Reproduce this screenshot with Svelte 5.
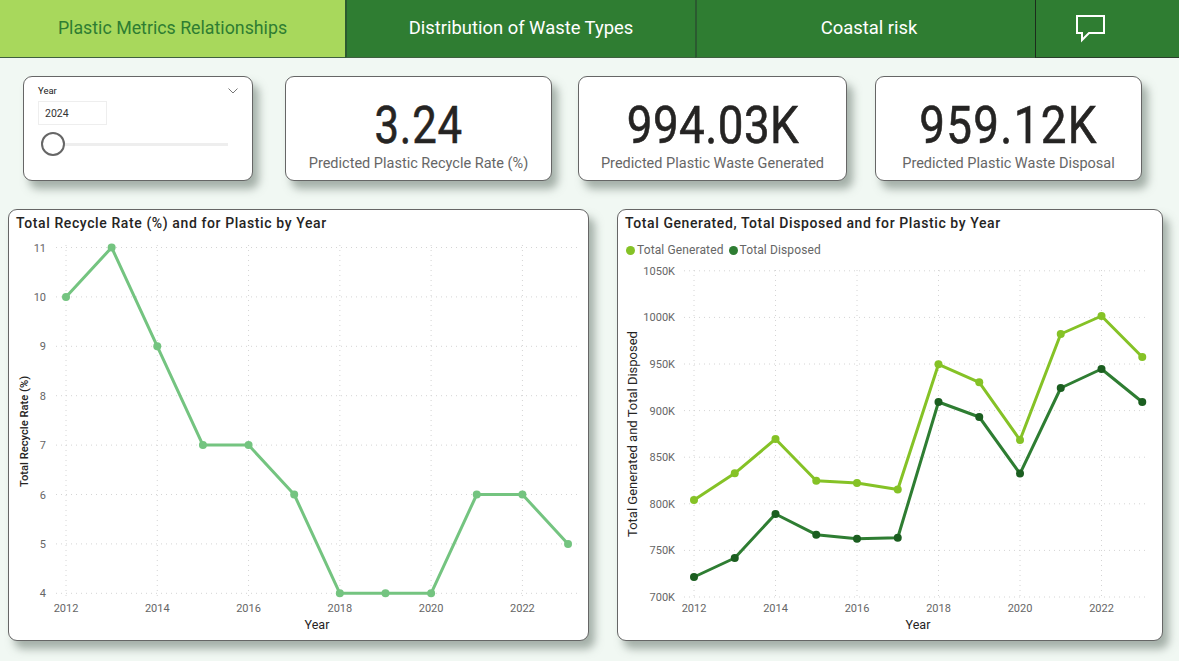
<script>
  const lx = (i) => 66 + i * 45.64;
  const ly = (v) => 593.3 - (v - 4) * 49.4;
  const rate = [10, 11, 9, 7, 7, 6, 4, 4, 4, 6, 6, 5];
  const leftPts = rate.map((v, i) => [lx(i) - 8, ly(v) - 209]);

  const rx = (i) => 694 + i * 40.75;
  const genY = [500, 473.3, 439, 480.7, 483, 489.5, 364.3, 382.3, 440, 334, 316, 357];
  const disY = [577, 558, 514, 534.7, 538.7, 537.7, 402, 417, 473.6, 388, 369, 402];
  const genPts = genY.map((y, i) => [rx(i) - 617, y - 209]);
  const disPts = disY.map((y, i) => [rx(i) - 617, y - 209]);
  const poly = (p) => p.map((a) => a.join(',')).join(' ');

  const leftYTicks = [4, 5, 6, 7, 8, 9, 10, 11];
  const rightYTicks = [700, 750, 800, 850, 900, 950, 1000, 1050];
  const yearTicks = [0, 2, 4, 6, 8, 10];
  const ry = (k) => 597 - ((k - 700) / 50) * 46.6 - 209;

  const cards = [
    { value: '3.24', label: 'Predicted Plastic Recycle Rate (%)', cls: 'c1' },
    { value: '994.03K', label: 'Predicted Plastic Waste Generated', cls: 'c2' },
    { value: '959.12K', label: 'Predicted Plastic Waste Disposal', cls: 'c3' }
  ];
</script>

<div class="page">
  <nav class="nav">
    <div class="tab active t1">Plastic Metrics Relationships</div>
    <div class="tab t2">Distribution of Waste Types</div>
    <div class="tab t3">Coastal risk</div>
    <div class="tab t4">
      <svg width="31" height="29" viewBox="0 0 31 29" aria-hidden="true">
        <path d="M2 2 H29 V19 H14 L7 26 V19 H2 Z" fill="none" stroke="#fff" stroke-width="2" />
      </svg>
    </div>
  </nav>

  <section class="kpis">
    <div class="card slicer">
      <div class="slicer-head">
        <span>Year</span>
        <svg width="10" height="6" viewBox="0 0 10 6" aria-hidden="true">
          <path d="M0.5 0.5 L5 5 L9.5 0.5" fill="none" stroke="#777" stroke-width="1" />
        </svg>
      </div>
      <div class="year-box">2024</div>
      <div class="track"><span class="knob"></span></div>
    </div>
    {#each cards as c}
      <div class="card kpi {c.cls}">
        <div class="value">{c.value}</div>
        <div class="label">{c.label}</div>
      </div>
    {/each}
  </section>

  <section class="charts">
    <div class="card chart left">
      <svg class="plot" width="581" height="432" viewBox="0 0 581 432">
        {#each leftYTicks as v}
          <line class="grid" x1="48" x2="570" y1={ly(v) - 209} y2={ly(v) - 209} />
          <text class="tick" x="38" y={ly(v) - 209 + 4} text-anchor="end">{v}</text>
        {/each}
        {#each yearTicks as i}
          <line class="grid" x1={lx(i) - 8} x2={lx(i) - 8} y1="36" y2="389" />
          <text class="tick" x={lx(i) - 8} y="403" text-anchor="middle">{2012 + i}</text>
        {/each}
        <polyline points={poly(leftPts)} fill="none" stroke="#74c480" stroke-width="3" stroke-linejoin="round" />
        {#each leftPts as p}
          <circle cx={p[0]} cy={p[1]} r="4" fill="#74c480" />
        {/each}
        <text class="axis" x="309" y="420" text-anchor="middle">Year</text>
        <text class="axis small" transform="translate(20 222.5) rotate(-90)" text-anchor="middle">Total Recycle Rate (%)</text>
      </svg>
      <h2 class="title">Total Recycle Rate (%) and for Plastic by Year</h2>
    </div>

    <div class="card chart right">
      <svg class="plot" width="546" height="432" viewBox="0 0 546 432">
        {#each rightYTicks as k}
          <line class="grid" x1="67" x2="531" y1={ry(k)} y2={ry(k)} />
          <text class="tick" x="58" y={ry(k) + 4} text-anchor="end">{k}K</text>
        {/each}
        {#each yearTicks as i}
          <line class="grid" x1={rx(i) - 617} x2={rx(i) - 617} y1="61" y2="388" />
          <text class="tick" x={rx(i) - 617} y="403" text-anchor="middle">{2012 + i}</text>
        {/each}
        <polyline points={poly(genPts)} fill="none" stroke="#85c226" stroke-width="3" stroke-linejoin="round" />
        {#each genPts as p}
          <circle cx={p[0]} cy={p[1]} r="4" fill="#85c226" />
        {/each}
        <polyline points={poly(disPts)} fill="none" stroke="#2e7d32" stroke-width="3" stroke-linejoin="round" />
        {#each disPts as p}
          <circle cx={p[0]} cy={p[1]} r="4" fill="#1b5e20" />
        {/each}
        <text class="axis" x="301" y="420" text-anchor="middle">Year</text>
        <text class="axis wide" transform="translate(20 225) rotate(-90)" text-anchor="middle">Total Generated and Total Disposed</text>
      </svg>
      <h2 class="title">Total Generated, Total Disposed and for Plastic by Year</h2>
      <div class="legend">
        <span class="dot gen"></span><span>Total Generated</span>
        <span class="dot dis"></span><span>Total Disposed</span>
      </div>
    </div>
  </section>
</div>

<style>
  :global(body) {
    margin: 0;
    background: #f1f8f3;
  }
  .page {
    width: 1179px;
    height: 661px;
    overflow: hidden;
    background: #f1f8f3;
    font-family: Roboto, "Liberation Sans", sans-serif;
  }
  .nav {
    display: grid;
    grid-template-columns: 345px 350px 340px 144px;
    height: 57px;
  }
  .tab {
    display: flex;
    align-items: center;
    justify-content: center;
    box-sizing: border-box;
    background: #2f7d32;
    color: #fff;
    font-size: 18.4px;
    padding-bottom: 2px;
    border-bottom: 1px solid #3f5f40;
    border-left: 2px solid #2b5a30;
  }
  .tab.active {
    background: #a8d85c;
    color: #2e7d32;
    border-left: none;
    font-size: 17.8px;
  }
  .t3 {
    padding-left: 6px;
  }
  .t4 {
    border-left: 1px solid #1c2c1c;
    border-bottom-color: #2a3f2c;
    padding-right: 34px;
    padding-bottom: 0;
    height: 58px;
  }
  .kpis {
    display: flex;
    padding: 19px 0 0 23px;
    height: 105px;
  }
  .card {
    box-sizing: border-box;
    background: #fff;
    border: 1px solid #666;
    border-radius: 9px;
    box-shadow: 6px 8px 9px rgba(90, 105, 95, 0.5);
  }
  .slicer {
    width: 230px;
    margin-right: 32px;
    padding: 8px 14px;
  }
  .slicer-head {
    display: flex;
    justify-content: space-between;
    align-items: center;
    font-size: 9.5px;
    color: #222;
  }
  .year-box {
    margin-top: 5px;
    width: 69px;
    height: 24px;
    box-sizing: border-box;
    border: 1px solid #eee;
    font-size: 10.5px;
    color: #333;
    padding: 5px 6px;
  }
  .track {
    position: relative;
    margin: 18px 10px 0 3px;
    height: 3px;
    background: #eee;
  }
  .knob {
    position: absolute;
    left: 0;
    top: -11px;
    width: 24px;
    height: 24px;
    box-sizing: border-box;
    background: #fff;
    border: 2px solid #666;
    border-radius: 50%;
  }
  .kpi {
    display: flex;
    flex-direction: column;
    align-items: center;
    padding-top: 19px;
  }
  .c1 { width: 267px; margin-right: 26px; }
  .c2 { width: 269px; margin-right: 28px; }
  .c3 { width: 267px; }
  .value {
    font-size: 52px;
    line-height: 60px;
    font-weight: 400;
    color: #252423;
    -webkit-text-stroke: 0.6px #252423;
    transform: scaleX(0.88);
    letter-spacing: 0.5px;
  }
  .c1 .value {
    transform: scaleX(0.84);
    letter-spacing: 1px;
  }
  .c3 .value {
    letter-spacing: 1.5px;
  }
  .label {
    margin-top: -1px;
    font-size: 14.5px;
    color: #666;
  }
  .charts {
    display: flex;
    padding: 28px 0 0 8px;
  }
  .chart {
    position: relative;
    height: 432px;
  }
  .left { width: 581px; margin-right: 28px; }
  .right { width: 546px; }
  .plot {
    position: absolute;
    left: -1px;
    top: -1px;
  }
  .title {
    position: relative;
    margin: 4px 0 0 7px;
    font-size: 14px;
    line-height: 18px;
    font-weight: 500;
    letter-spacing: 0.6px;
    color: #252423;
  }
  .legend {
    position: relative;
    display: flex;
    align-items: center;
    margin: 11px 0 0 8px;
    font-size: 12px;
    letter-spacing: 0.12px;
    color: #666;
  }
  .dot {
    width: 9px;
    height: 9px;
    border-radius: 50%;
    margin-right: 2px;
  }
  .dot.dis { margin-left: 5px; }
  .gen { background: #85c226; }
  .dis { background: #2e7d32; }
  .grid {
    stroke: #d4d4d4;
    stroke-width: 1;
    stroke-dasharray: 1 4;
  }
  .tick {
    font-size: 11px;
    fill: #666;
  }
  .axis {
    font-size: 12.5px;
    fill: #252423;
  }
  .axis.small {
    font-size: 11.2px;
    font-weight: 500;
  }
  .axis.wide {
    font-size: 13px;
  }
</style>
